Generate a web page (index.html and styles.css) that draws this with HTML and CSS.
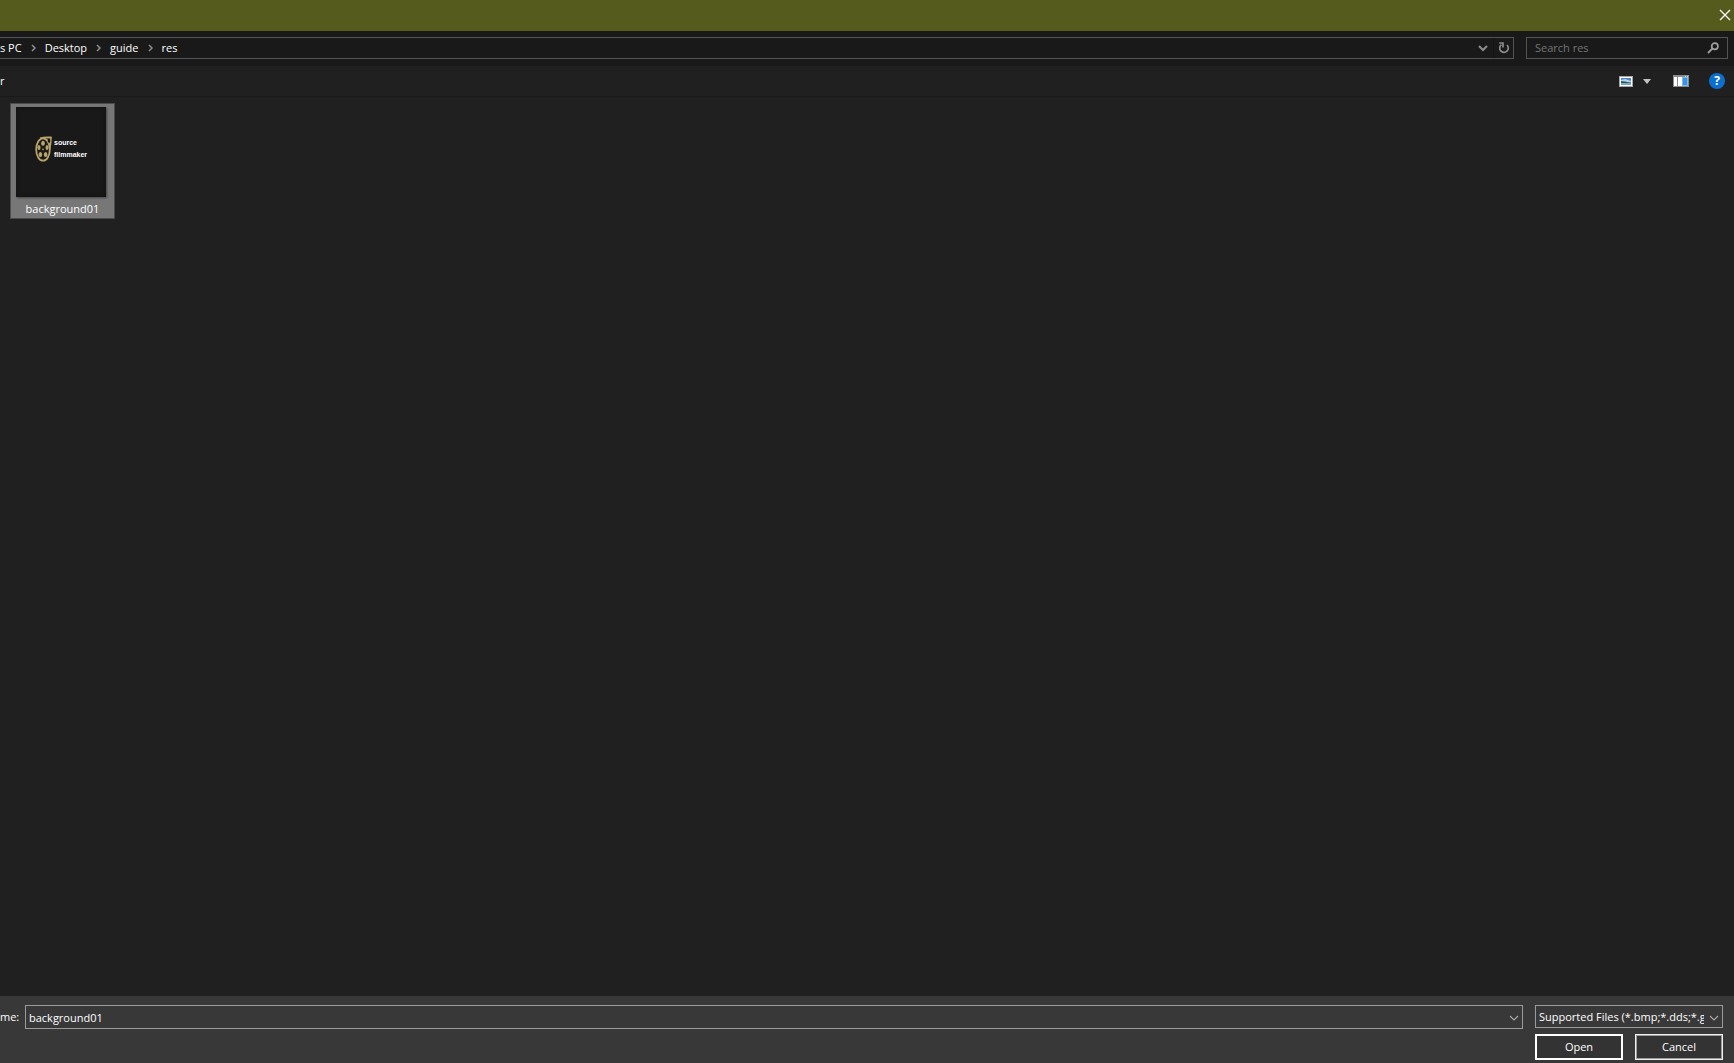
FILE: index.html
```html
<!DOCTYPE html>
<html lang="en">
<head>
<meta charset="utf-8">
<title>Open</title>
<link rel="stylesheet" href="styles.css">
</head>
<body>
<div class="dialog">
  <header class="titlebar">
    <button class="close" type="button" aria-label="Close">
      <svg width="12" height="12" viewBox="0 0 12 12"><path d="M1 1L11 11M11 1L1 11" fill="none" stroke="#fff" stroke-width="1.3"/></svg>
    </button>
  </header>

  <div class="navbar">
    <div class="address">
      <nav class="crumbs">
        <a href="#">s PC</a>
        <svg class="sep" width="6" height="8" viewBox="0 0 6 8"><path d="M1 1L4 4L1 7" fill="none" stroke="#8c8c8c" stroke-width="1.5"/></svg>
        <a href="#">Desktop</a>
        <svg class="sep" width="6" height="8" viewBox="0 0 6 8"><path d="M1 1L4 4L1 7" fill="none" stroke="#8c8c8c" stroke-width="1.5"/></svg>
        <a href="#">guide</a>
        <svg class="sep" width="6" height="8" viewBox="0 0 6 8"><path d="M1 1L4 4L1 7" fill="none" stroke="#8c8c8c" stroke-width="1.5"/></svg>
        <a href="#">res</a>
      </nav>
      <button class="nav-button" type="button" aria-label="Previous locations">
        <svg width="10" height="8" viewBox="0 0 10 8"><path d="M1 2L5 6L9 2" fill="none" stroke="#8c8c8c" stroke-width="2"/></svg>
      </button>
      <button class="nav-button refresh" type="button" aria-label="Refresh">
        <svg width="12" height="12" viewBox="0 0 12 12"><path d="M9 3A4.3 4.3 0 1 1 3.4 2.7M1.2 1H5V5.4" fill="none" stroke="#8c8c8c" stroke-width="1.7"/></svg>
      </button>
    </div>
    <div class="search">
      <input type="text" placeholder="Search res" aria-label="Search res">
      <svg width="12" height="12" viewBox="0 0 12 12"><circle cx="7.8" cy="4.2" r="3.1" fill="none" stroke="#a0a0a0" stroke-width="1.7"/><path d="M5.6 6.4L1 11" stroke="#a0a0a0" stroke-width="1.9"/></svg>
    </div>
  </div>

  <div class="toolbar">
    <button class="tool organize" type="button">r</button>
    <button class="tool" type="button" aria-label="Change your view">
      <svg width="14" height="11" viewBox="0 0 14 11"><path fill="#a6a6a6" d="M0 0h14v11H0z"/><path fill="#fff" d="M1 1h12v9H1z"/><path fill="#4f83cf" d="M2 2h10v7H2z"/><path fill="#b9d8f0" d="M2 4L6 3L12 5V6H2z"/><path fill="#2f5f58" d="M2 5Q7 5 11 7H2z"/><path fill="#7ba6c2" d="M2 7H12V9H2z"/></svg>
    </button>
    <button class="tool arrow" type="button" aria-label="More options">
      <svg width="8" height="5" viewBox="0 0 8 5"><path d="M0 0H8L4 5z" fill="#c4c4c4"/></svg>
    </button>
    <button class="tool preview" type="button" aria-label="Preview pane">
      <svg width="16" height="12" viewBox="0 0 16 12"><path fill="#8a8a8a" d="M0 0h16v12H0z"/><path fill="#d8d8d8" d="M12 1h1v1h-1zM14 1h1v1h-1z"/><path fill="#fff" d="M1 2h3v9H1zM5 2h4v9H5z"/><path fill="#77bdf2" d="M9 2h6v9H9z"/><path fill="#3995dd" d="M10 3h4v7h-4z"/></svg>
    </button>
    <button class="tool help" type="button" aria-label="Help">?</button>
  </div>

  <main class="files">
    <figure class="file">
      <div class="thumb">
        <svg class="reel" width="17" height="26" viewBox="0 0 17 26">
          <path d="M5 2.2C9 1 13 1.2 16 1.4C16 6 15.6 9 14.4 13" fill="#5d5236" stroke="#b9a36a" stroke-width="1.6"/>
          <ellipse cx="8" cy="13.5" rx="6.8" ry="11.2" fill="#1b1a17" stroke="#b9a36a" stroke-width="1.8"/>
          <g fill="#b9a36a"><ellipse cx="8" cy="7.2" rx="1.9" ry="2.5"/><ellipse cx="4" cy="11.6" rx="1.5" ry="2.5"/><ellipse cx="12" cy="11.6" rx="1.5" ry="2.5"/><ellipse cx="5.4" cy="18.4" rx="1.8" ry="2.5"/><ellipse cx="10.6" cy="18.4" rx="1.8" ry="2.5"/><circle cx="8" cy="13.4" r="0.8"/></g>
          <ellipse cx="14" cy="4.8" rx="1.3" ry="2" fill="#15140f"/>
        </svg>
        <span class="wordmark">source<br>filmmaker</span>
      </div>
      <figcaption>background01</figcaption>
    </figure>
  </main>

  <form class="footer">
    <label for="name">me:</label>
    <div class="combo">
      <input id="name" type="text" value="background01">
      <svg class="chevron" width="10" height="6" viewBox="0 0 10 6"><path d="M1 1L5 5L9 1" fill="none" stroke="#a8a8a8" stroke-width="1.2"/></svg>
    </div>
    <div class="side">
      <div class="combo filter">
        <select aria-label="File type"><option>Supported Files (*.bmp;*.dds;*.g</option></select>
        <svg class="chevron" width="10" height="6" viewBox="0 0 10 6"><path d="M1 1L5 5L9 1" fill="none" stroke="#a8a8a8" stroke-width="1.2"/></svg>
      </div>
      <div class="actions">
        <button class="action primary" type="button">Open</button>
        <button class="action" type="button">Cancel</button>
      </div>
    </div>
  </form>
</div>
</body>
</html>
```
FILE: styles.css
```css
* { box-sizing: border-box; }

body {
  margin: 0;
  background: #202020;
  color: #fff;
  font: 11px/16px "Open Sans", "Noto Sans", sans-serif;
}

button, input, select {
  margin: 0;
  padding: 0;
  border: 0;
  border-radius: 0;
  background: none;
  color: inherit;
  font: inherit;
  outline: 0;
}

svg { display: block; flex: none; }

.dialog {
  display: flex;
  flex-direction: column;
  min-height: 100vh;
  overflow: hidden;
}

.titlebar {
  display: flex;
  justify-content: flex-end;
  height: 31px;
  padding: 0 3px 1px 0;
  background: #545b1c;
}

.close { display: flex; align-items: center; }

.navbar {
  display: flex;
  gap: 12px;
  height: 35px;
  padding: 6px 6px 7px 0;
  background: #191919;
}

.address {
  display: flex;
  flex: 1;
  border: 1px solid #535353;
  border-left: 0;
}

.crumbs {
  display: flex;
  flex: 1;
  align-items: center;
}

.crumbs a { color: #fff; text-decoration: none; }

.sep { margin: 0 8px 0 9px; }

.nav-button {
  display: flex;
  align-items: center;
  justify-content: center;
  width: 20px;
}

.refresh { border-left: 1px solid #141414; }

.search {
  display: flex;
  align-items: center;
  width: 202px;
  padding: 0 8px;
  border: 1px solid #535353;
}

.search input { flex: 1; min-width: 0; }
.search input::placeholder { color: #757575; opacity: 1; }

.toolbar {
  display: flex;
  align-items: center;
  height: 31px;
  padding-right: 9px;
  border-bottom: 1px solid #191919;
}

.tool { display: flex; }
.organize { margin-right: auto; }
.arrow { margin: 0 22px 0 10px; }

.help {
  justify-content: center;
  width: 16px;
  height: 16px;
  margin-left: 20px;
  border-radius: 50%;
  background: #0a6fd0;
  font-size: 12px;
  font-weight: 700;
}

.files { flex: 1; padding: 6px 10px; }

.file {
  width: 105px;
  margin: 0;
  padding: 3px 5px 1px;
  border: 1px solid #4b4b4b;
  background: #777;
  text-align: center;
}

.thumb {
  display: flex;
  align-items: center;
  gap: 2px;
  width: 90px;
  height: 90px;
  margin-bottom: 4px;
  padding: 0 0 6px 19px;
  background: #191919;
  box-shadow: inset 0 0 5px #111, 1px 1px 2px #444;
}

.wordmark {
  color: #fff;
  font: 700 7px/12px "Liberation Sans", sans-serif;
  text-align: left;
}

.footer {
  display: flex;
  align-items: flex-start;
  padding: 9px 11px 3px 0;
  background: #383838;
}

.footer label { width: 25px; padding-top: 4px; }

.combo {
  position: relative;
  flex: 1;
  height: 24px;
  border: 1px solid #9b9b9b;
}

.combo input, .combo select {
  display: block;
  width: 100%;
  height: 100%;
  padding: 0 18px 0 3px;
}

.combo select { appearance: none; background: #383838; }

.chevron { position: absolute; top: 9px; right: 3px; }

.side { width: 188px; margin-left: 12px; }
.filter { height: 23px; }

.actions {
  display: grid;
  grid-template-columns: 1fr 1fr;
  gap: 12px;
  margin-top: 6px;
}

.action {
  height: 26px;
  border: 1px solid #f0f0f0;
  background: #333;
  box-shadow: inset 0 0 0 1px #9b9b9b;
}

.primary { border: 2px solid #fff; box-shadow: none; }
```
